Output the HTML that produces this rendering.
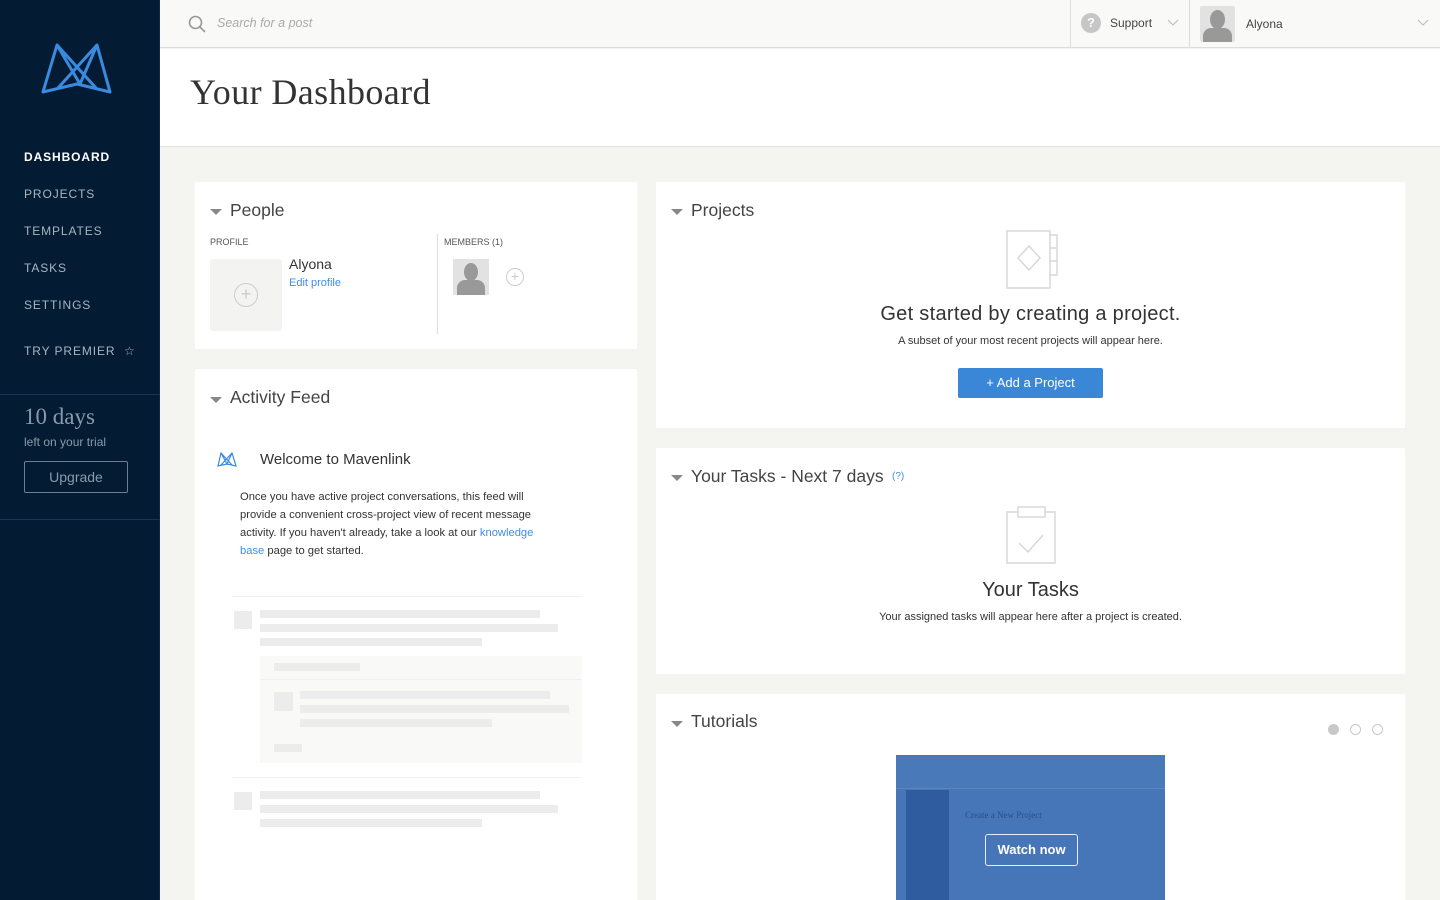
<!DOCTYPE html>
<html><head><meta charset="utf-8"><style>
*{box-sizing:border-box;margin:0;padding:0}
html,body{width:1440px;height:900px;overflow:hidden}
body{background:#f4f4f1;font-family:"Liberation Sans",sans-serif;color:#333;position:relative}
.side{position:absolute;left:0;top:0;width:160px;height:900px;background:#031c33;border-right:1px solid #0d2a44}
.nav{position:absolute;left:24px;font-size:12px;letter-spacing:0.9px;color:#a8b4c0}
.top{position:absolute;left:160px;top:0;width:1280px;height:48px;background:#f9f9f7;border-bottom:1px solid #ddd}
.head{position:absolute;left:160px;top:49px;width:1280px;height:98px;background:#fff;border-bottom:1px solid #e2e2e0}
.card{position:absolute;background:#fff;border-radius:2px}
.ct{position:absolute;font-size:17.5px;color:#444}
.tri{position:absolute;width:0;height:0;border-left:6px solid transparent;border-right:6px solid transparent;border-top:6px solid #888}
.sk{position:absolute;background:#ececec}
.blue{color:#3d8ee6}
</style></head><body>
<div class="side">
<svg style="position:absolute;left:38px;top:40px" width="78" height="58" viewBox="38 40 78 58" fill="none" stroke="#3a8be0" stroke-width="3" stroke-linejoin="round">
<path d="M43 92 L57 45 L80 84 L97 45 L110 92 L77 84 Z"/>
<path d="M57 45 L96 88 M97 45 L58 88"/>
</svg>
<div class="nav" style="top:150px;color:#fff;font-weight:bold">DASHBOARD</div>
<div class="nav" style="top:187px">PROJECTS</div>
<div class="nav" style="top:224px">TEMPLATES</div>
<div class="nav" style="top:261px">TASKS</div>
<div class="nav" style="top:298px">SETTINGS</div>
<div class="nav" style="top:344px">TRY PREMIER &nbsp;☆</div>
<div style="position:absolute;left:0;top:394px;width:160px;border-top:1px solid #1d3650"></div>
<div style="position:absolute;left:24px;top:404px;font-family:'Liberation Serif',serif;font-size:23px;color:#8a9aaa">10 days</div>
<div style="position:absolute;left:24px;top:435px;font-size:12px;color:#8a9aaa">left on your trial</div>
<div style="position:absolute;left:24px;top:461px;width:104px;height:32px;border:1px solid #6b7e92;border-radius:2px;color:#8a9aaa;font-size:14px;text-align:center;line-height:30px">Upgrade</div>
<div style="position:absolute;left:0;top:519px;width:160px;border-top:1px solid #1d3650"></div>
</div>
<div class="top">
<svg style="position:absolute;left:28px;top:15px" width="18" height="18" fill="none" stroke="#999" stroke-width="1.6"><circle cx="7.5" cy="7.5" r="6"/><path d="M12 12 L17 17"/></svg>
<div style="position:absolute;left:57px;top:16px;font-size:12.5px;font-style:italic;color:#aaa">Search for a post</div>
<div style="position:absolute;left:910px;top:0;height:48px;border-left:1px solid #ddd"></div>
<div style="position:absolute;left:921px;top:13px;width:20px;height:20px;border-radius:50%;background:#c6c6c6;color:#fff;font-size:13px;font-weight:bold;text-align:center;line-height:20px">?</div>
<div style="position:absolute;left:950px;top:16px;font-size:12px;color:#444">Support</div>
<svg style="position:absolute;left:1007px;top:19px" width="12" height="8" fill="none" stroke="#bbb"><path d="M1 1 L6 6 L11 1"/></svg>
<div style="position:absolute;left:1029px;top:0;height:48px;border-left:1px solid #ddd"></div>
<div style="position:absolute;left:1040px;top:6px;width:35px;height:36px;background:#e2e2e2;border-radius:2px;overflow:hidden"><div style="position:absolute;left:10px;top:4px;width:15px;height:19px;border-radius:50%;background:#999"></div><div style="position:absolute;left:3px;top:22px;width:29px;height:20px;border-radius:8px 8px 0 0;background:#999"></div></div>
<div style="position:absolute;left:1086px;top:17px;font-size:12px;color:#444">Alyona</div>
<svg style="position:absolute;left:1257px;top:19px" width="12" height="8" fill="none" stroke="#bbb"><path d="M1 1 L6 6 L11 1"/></svg>
</div>
<div class="head"><div style="position:absolute;left:30px;top:22px;font-family:'Liberation Serif',serif;font-size:36px;letter-spacing:0.4px;color:#333">Your Dashboard</div></div>

<div class="card" style="left:195px;top:182px;width:442px;height:167px">
<div class="tri" style="left:15px;top:27px"></div><div class="ct" style="left:35px;top:18px">People</div>
<div style="position:absolute;left:15px;top:55px;font-size:9px;color:#555">PROFILE</div>
<div style="position:absolute;left:15px;top:77px;width:72px;height:72px;background:#f3f3f1;border-radius:3px"><div style="position:absolute;left:24px;top:24px;width:24px;height:24px;border:1.5px solid #ccc;border-radius:50%;color:#ccc;text-align:center;line-height:20px;font-size:18px">+</div></div>
<div style="position:absolute;left:94px;top:74px;font-size:14px;color:#333">Alyona</div>
<div style="position:absolute;left:94px;top:95px;font-size:11px" class="blue">Edit profile</div>
<div style="position:absolute;left:242px;top:52px;height:100px;border-left:1px solid #ddd"></div>
<div style="position:absolute;left:249px;top:55px;font-size:9px;color:#555">MEMBERS (1)</div>
<div style="position:absolute;left:258px;top:77px;width:36px;height:36px;background:#e2e2e2;overflow:hidden"><div style="position:absolute;left:11px;top:4px;width:14px;height:18px;border-radius:50%;background:#999"></div><div style="position:absolute;left:4px;top:21px;width:28px;height:20px;border-radius:8px 8px 0 0;background:#999"></div></div>
<div style="position:absolute;left:311px;top:86px;width:18px;height:18px;border:1px solid #ccc;border-radius:50%;color:#ccc;text-align:center;line-height:15px;font-size:14px">+</div>
</div>

<div class="card" style="left:195px;top:369px;width:442px;height:531px;border-radius:2px 2px 0 0">
<div class="tri" style="left:15px;top:28px"></div><div class="ct" style="left:35px;top:18px">Activity Feed</div>
<svg style="position:absolute;left:22px;top:83px" width="20" height="15" viewBox="0 0 20 15" fill="none" stroke="#3a8be0" stroke-width="1.2"><path d="M1 14 L4 1 L10 12 L15 1 L19 14 L10 12 Z M4 1 L15 13 M15 1 L4 13"/></svg>
<div style="position:absolute;left:65px;top:82px;font-size:15px;color:#333">Welcome to Mavenlink</div>
<div style="position:absolute;left:45px;top:119px;width:318px;font-size:11.2px;line-height:18px;color:#333">Once you have active project conversations, this feed will provide a convenient cross-project view of recent message activity. If you haven't already, take a look at our <span class="blue">knowledge base</span> page to get started.</div>
<div style="position:absolute;left:37px;top:227px;width:350px;border-top:1px solid #f0f0f0"></div>
<div class="sk" style="left:39px;top:242px;width:18px;height:18px"></div>
<div class="sk" style="left:65px;top:241px;width:280px;height:8px"></div>
<div class="sk" style="left:65px;top:255px;width:298px;height:8px"></div>
<div class="sk" style="left:65px;top:269px;width:222px;height:8px"></div>
<div style="position:absolute;left:65px;top:287px;width:322px;height:107px;background:#f9f9f8"></div>
<div class="sk" style="left:79px;top:294px;width:86px;height:8px"></div>
<div style="position:absolute;left:65px;top:310px;width:322px;border-top:1px solid #f0f0f0"></div>
<div class="sk" style="left:79px;top:323px;width:19px;height:19px"></div>
<div class="sk" style="left:105px;top:322px;width:250px;height:8px"></div>
<div class="sk" style="left:105px;top:336px;width:269px;height:8px"></div>
<div class="sk" style="left:105px;top:350px;width:192px;height:8px"></div>
<div class="sk" style="left:79px;top:375px;width:28px;height:8px"></div>
<div style="position:absolute;left:37px;top:408px;width:350px;border-top:1px solid #f0f0f0"></div>
<div class="sk" style="left:39px;top:423px;width:18px;height:18px"></div>
<div class="sk" style="left:65px;top:422px;width:280px;height:8px"></div>
<div class="sk" style="left:65px;top:436px;width:298px;height:8px"></div>
<div class="sk" style="left:65px;top:450px;width:222px;height:8px"></div>
</div>

<div class="card" style="left:656px;top:182px;width:749px;height:246px">
<div class="tri" style="left:15px;top:27px"></div><div class="ct" style="left:35px;top:18px">Projects</div>
<svg style="position:absolute;left:349px;top:48px" width="54" height="60" fill="none" stroke="#d6d6d6" stroke-width="1.4"><rect x="2" y="1" width="43" height="57"/><path d="M45 5 H52 V45 H45 M45 18 H52 M45 31 H52"/><path d="M24 16 L35 28 L24 40 L13 28 Z"/></svg>
<div style="position:absolute;left:0;width:749px;top:121px;text-align:center;font-size:20px;letter-spacing:0.3px;color:#333">Get started by creating a project.</div>
<div style="position:absolute;left:0;width:749px;top:153px;text-align:center;font-size:11px;color:#333">A subset of your most recent projects will appear here.</div>
<div style="position:absolute;left:302px;top:186px;width:145px;height:30px;background:#3a87d8;color:#fff;font-size:13px;text-align:center;line-height:30px;border-radius:2px">+ Add a Project</div>
</div>

<div class="card" style="left:656px;top:448px;width:749px;height:226px">
<div class="tri" style="left:15px;top:27px"></div><div class="ct" style="left:35px;top:18px">Your Tasks - Next 7 days</div>
<div style="position:absolute;left:236px;top:23px;font-size:10px" class="blue">(?)</div>
<svg style="position:absolute;left:349px;top:57px" width="52" height="60" fill="none" stroke="#d6d6d6" stroke-width="1.4"><path d="M13 7 H2 V58 H50 V7 H40"/><rect x="13" y="2" width="27" height="10"/><path d="M14 38 L23 47 L38 30"/></svg>
<div style="position:absolute;left:0;width:749px;top:131px;text-align:center;font-size:20px;color:#333">Your Tasks</div>
<div style="position:absolute;left:0;width:749px;top:163px;text-align:center;font-size:11px;color:#333">Your assigned tasks will appear here after a project is created.</div>
</div>

<div class="card" style="left:656px;top:694px;width:749px;height:206px;border-radius:2px 2px 0 0">
<div class="tri" style="left:15px;top:27px"></div><div class="ct" style="left:35px;top:17px">Tutorials</div>
<div style="position:absolute;left:672px;top:30px;width:11px;height:11px;border-radius:50%;background:#c8c8c8"></div>
<div style="position:absolute;left:694px;top:30px;width:11px;height:11px;border-radius:50%;border:1px solid #c8c8c8"></div>
<div style="position:absolute;left:716px;top:30px;width:11px;height:11px;border-radius:50%;border:1px solid #c8c8c8"></div>
<div style="position:absolute;left:240px;top:61px;width:269px;height:145px;background:#4675b8;overflow:hidden">
<div style="position:absolute;left:0;top:0;width:269px;height:34px;background:#4a79ba;border-bottom:1px solid #5b86c0"></div>
<div style="position:absolute;left:10px;top:35px;width:43px;height:120px;background:#2f5c9e"></div>
<div style="position:absolute;left:69px;top:55px;font-family:'Liberation Serif',serif;font-size:9px;color:#2a4f86">Create a New Project</div>
<div style="position:absolute;left:89px;top:79px;width:93px;height:32px;border:1.5px solid #e8eef8;border-radius:3px;color:#fff;font-weight:bold;font-size:13px;text-align:center;line-height:29px">Watch now</div>
</div>
</div>
</body></html>
